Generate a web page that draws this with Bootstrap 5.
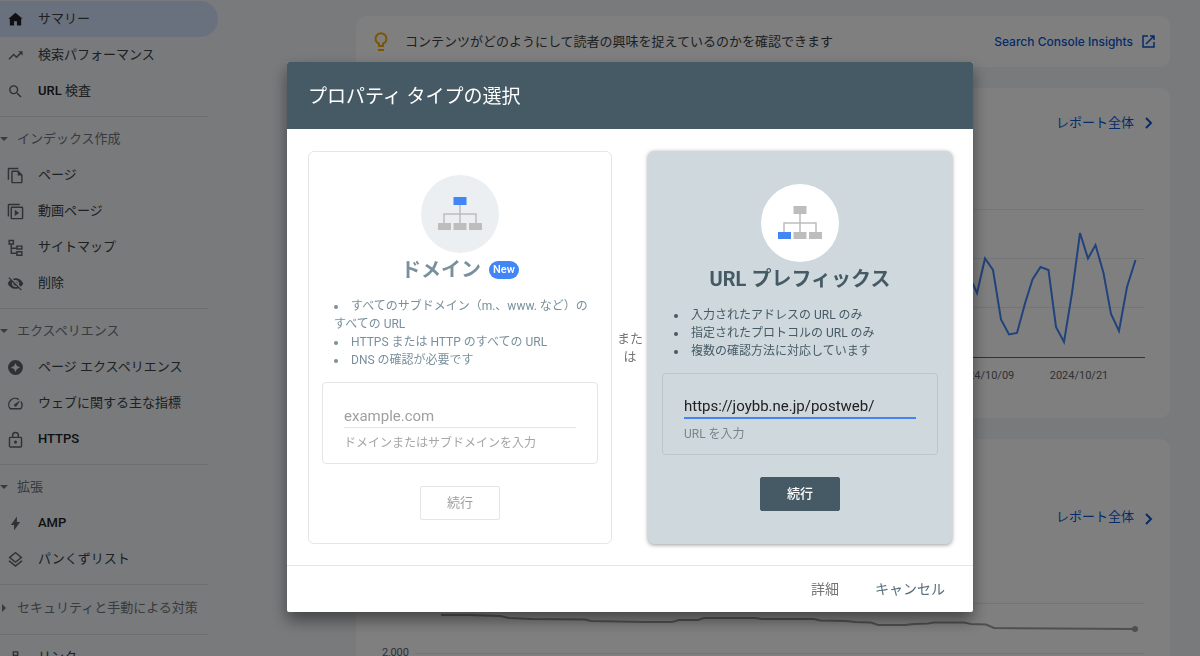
<!DOCTYPE html>
<html lang="ja">
<head>
<meta charset="utf-8">
<meta name="viewport" content="width=device-width, initial-scale=1">
<title>プロパティ タイプの選択</title>
<link href="https://cdn.jsdelivr.net/npm/bootstrap@5.3.0/dist/css/bootstrap.min.css" rel="stylesheet">
<style>
  body { font-family: Roboto, "Noto Sans CJK JP", sans-serif; font-size: 13px; background: #f0f4f9; color: #202124; overflow: hidden; height: 100vh; }
  /* sidebar */
  .side { width: 218px; padding-top: 1px; flex: none; }
  .side a { height: 36px; padding-left: 7px; gap: 14px; color: #3c4043; font-weight: 400; white-space: nowrap; }
  .side a svg { width: 17px; height: 17px; flex: none; fill: #5f6368; }
  .side a.current { background: #d3e3fd; border-radius: 0 18px 18px 0; }
  .side a.current svg { fill: #202124; }
  .side .latin { font-weight: 500; color: #202124; }
  .side hr { margin: 7px 10px 0 0; color: #dadce0; opacity: 1; }
  .side .group-title { height: 40px; padding-top: 4px; gap: 9px; color: #70757a; font-size: 13px; white-space: nowrap; }
  .side .group-title.collapsed-group { height: 42px; }
  .group-title svg { width: 8px; height: 8px; fill: #70757a; }
  /* page behind the dialog */
  .page-main { padding: 16px 30px 0 138px; gap: 21px; }
  .panel { background: #fff; border-radius: 10px; }
  .tip { height: 51px; padding: 0 14px 0 16px; gap: 15px; color: #3c4043; }
  .blue { color: #0b57d0; fill: #0b57d0; }
  .brand-text { font-family: Inter, Roboto, sans-serif; font-weight: 500; font-size: 12px; }
  .report-link { padding: 25px 13px 0 0; gap: 7px; height: 45px; }
  .lower-link { padding-top: 68px; height: 93px; }
  .chart text { font-size: 11px; fill: #5f6368; }
  .grid-line { stroke: #e8eaed; }
  /* dialog */
  .modal { --bs-modal-width: 686px; --bs-modal-margin: 62px; --bs-modal-border-radius: 2px; --bs-modal-border-width: 0; padding-left: 60px; }
  .modal-content { box-shadow: 0 8px 16px rgba(0,0,0,.45); }
  .modal-header { background: #455a64; color: #fff; padding: 3px 21px 0; height: 67px; border: 0; border-radius: 2px 2px 0 0; }
  .modal-title { font-size: 19px; font-weight: 400; }
  .modal-body { padding: 22px 21px 21px; }
  .modal-footer { height: 47px; padding: 0 28px; border-top: 1px solid #e4e6e7; gap: 36px; }
  .modal-footer button { font-size: 14px; color: #757575; margin: 0; }
  .modal-footer .cancel { color: #546e7a; }
  .choice { border: 1px solid #e4e6e7; border-radius: 6px; padding: 23px 13px; flex: 1 1 0; min-width: 0; }
  .choice.selected { background: #cfd8dc; border-color: #cfd8dc; box-shadow: 0 1px 4px rgba(0,0,0,.4); color: #455a64; }
  .between { width: 36px; font-size: 13px; line-height: 18px; color: #757575; }
  .disc { width: 78px; height: 78px; background: #eceff1; }
  .selected .disc { background: #fff; }
  .choice h2 { font-size: 20px; line-height: 30px; font-weight: 700; margin: 2px 0 12px; }
  .unselected { color: #78909c; }
  .new-badge { background: #4285f4; font-size: 11px; line-height: 12px; font-weight: 500; padding: 3px 4px; }
  .choice ul { font-size: 12px; line-height: 18px; list-style-position: inside; padding: 0 4px 0 12px; margin: 0 0 13px; }
  .entry { border: 1px solid #e4e6e7; border-radius: 4px; height: 82px; padding: 21px 21px 0; margin-bottom: 22px; }
  .selected .entry { border-color: #bcc5c9; }
  .entry input { font-size: 15px; line-height: 20px; height: 24px; padding: 0; border: 0; border-bottom: 1px solid #e4e6e7; border-radius: 0; background: transparent; color: #212121; outline: 0; }
  .entry input::placeholder { color: #a0a0a0; }
  .selected .entry input { border-bottom: 2px solid #4285f4; }
  .entry label { font-size: 12px; line-height: 16px; margin-top: 7px; color: #a6a6a6; }
  .selected .entry label { color: #78868c; }
  .go { width: 80px; height: 34px; font-size: 13px; padding: 0; border-radius: 2px; border: 1px solid #e4e6e7; background: #fff; color: #9e9e9e; }
  .go.primary { background: #455a64; border-color: #455a64; color: #fff; font-weight: 500; }
</style>
</head>
<body>
<div class="d-flex">
  <nav class="side">
    <a href="#" class="current d-flex align-items-center text-decoration-none"><svg viewBox="0 0 24 24"><path d="M10 20.500v-6h4v6h6v-9.500h2L12 2.500 2 11h2v9.500z"/></svg>サマリー</a>
    <a href="#" class="d-flex align-items-center text-decoration-none"><svg viewBox="0 0 24 24"><path d="M16 6l2.290 2.290-4.880 4.880-4-4L2 16.590 3.410 18l6-6 4 4 6.300-6.290L22 12V6z"/></svg>検索パフォーマンス</a>
    <a href="#" class="d-flex align-items-center text-decoration-none"><svg viewBox="0 0 24 24"><path d="M15.500 14h-.79l-.28-.27C15.410 12.590 16 11.110 16 9.500 16 5.910 13.090 3 9.500 3S3 5.910 3 9.500 5.910 16 9.500 16c1.610 0 3.090-.59 4.230-1.570l.27.28v.79l5 4.990L20.490 19l-4.990-5zm-6 0C7.010 14 5 11.990 5 9.500S7.010 5 9.500 5 14 7.010 14 9.500 11.990 14 9.500 14z"/></svg><span><span class="latin">URL</span> 検査</span></a>
    <hr>
    <div class="group-title d-flex align-items-center"><svg viewBox="0 0 8 8"><path d="M0 2h8L4 6z"/></svg>インデックス作成</div>
    <a href="#" class="d-flex align-items-center text-decoration-none"><svg viewBox="0 0 24 24"><path d="M16 1H3C1.900 1 1 1.900 1 3v15h2V3h13zM16 5H8C6.900 5 6 5.900 6 7v14c0 1.100.9 2 2 2h12c1.100 0 2-.9 2-2V11zM8 21V7h7v5h5v9z"/></svg>ページ</a>
    <a href="#" class="d-flex align-items-center text-decoration-none"><svg viewBox="0 0 24 24"><path d="M18 1H3C1.900 1 1 1.900 1 3v16h2V3h15zM21 5H7C5.900 5 5 5.900 5 7v14c0 1.100.9 2 2 2h14c1.100 0 2-.9 2-2V7c0-1.100-.9-2-2-2zM7 21V7h14v14zM11 9.500v9l6-4.500z"/></svg>動画ページ</a>
    <a href="#" class="d-flex align-items-center text-decoration-none"><svg viewBox="0 0 24 24"><path d="M2 1h8v7H7v4h6V9h9v6h-9v-1H7v5h6v-2h9v7h-9v-3H5V8H2zM4 3v3h4V3zM15 11v2h5v-2zM15 19v3h5v-3z" fill-rule="evenodd"/></svg>サイトマップ</a>
    <a href="#" class="d-flex align-items-center text-decoration-none"><svg viewBox="0 0 24 24"><path d="M12 7c2.760 0 5 2.240 5 5 0 .65-.13 1.260-.36 1.830l2.920 2.920c1.510-1.260 2.700-2.890 3.430-4.750-1.730-4.390-6-7.500-11-7.500-1.400 0-2.740.25-3.980.7l2.160 2.160C10.740 7.130 11.350 7 12 7zM2 4.270l2.740 2.740C3.080 8.300 1.780 10.020 1 12c1.730 4.390 6 7.500 11 7.500 1.550 0 3.030-.3 4.380-.84L19.730 22 21 20.730 3.270 3zM7.530 9.800l1.550 1.550c-.05.21-.08.43-.08.65 0 1.660 1.340 3 3 3 .22 0 .44-.03.65-.08l1.550 1.550c-.67.33-1.410.53-2.200.53-2.760 0-5-2.240-5-5 0-.79.2-1.530.53-2.200zM11.840 9.020l3.150 3.150.02-.16c0-1.660-1.340-3-3-3z"/></svg>削除</a>
    <hr>
    <div class="group-title d-flex align-items-center"><svg viewBox="0 0 8 8"><path d="M0 2h8L4 6z"/></svg>エクスペリエンス</div>
    <a href="#" class="d-flex align-items-center text-decoration-none"><svg viewBox="0 0 24 24"><path fill-rule="evenodd" d="M12 1.500a10.500 10.500 0 1 0 0 21 10.500 10.500 0 0 0 0-21zM12 5.500l2 4.500 4.500 2-4.500 2-2 4.500-2-4.500-4.500-2 4.500-2z"/></svg>ページ エクスペリエンス</a>
    <a href="#" class="d-flex align-items-center text-decoration-none"><svg viewBox="0 0 24 24"><path d="M20.400 8.600l-1.200 1.800A8 8 0 0 1 19 18.500H5A8 8 0 0 1 15.600 6.900l1.800-1.300A10 10 0 0 0 3.400 19.500c.3.600 1 1 1.600 1H19c.7 0 1.300-.4 1.700-1a10 10 0 0 0-.3-10.900zM10.600 15.900a2 2 0 0 0 2.800 0L19 7.500l-8.400 5.600a2 2 0 0 0 0 2.800z"/></svg>ウェブに関する主な指標</a>
    <a href="#" class="d-flex align-items-center text-decoration-none"><svg viewBox="0 0 24 24"><path fill-rule="evenodd" d="M19 8h-2V6A5 5 0 0 0 7 6v2H5c-1.500 0-2.500.9-2.500 2v11c0 1.100 1 2.500 2.500 2.500h14c1.500 0 2.500-1.400 2.500-2.500V10c0-1.100-1-2-2.500-2zM9 6a3 3 0 0 1 6 0v2H9zM4.500 10h15v11.500h-15zM12 13.500a2.200 2.200 0 1 0 0 4.400 2.200 2.200 0 0 0 0-4.400z"/></svg><span class="latin">HTTPS</span></a>
    <hr>
    <div class="group-title d-flex align-items-center"><svg viewBox="0 0 8 8"><path d="M0 2h8L4 6z"/></svg>拡張</div>
    <a href="#" class="d-flex align-items-center text-decoration-none"><svg viewBox="0 0 24 24"><path d="M10 22v-8H5.500L14 2v8h4.500z"/></svg><span class="latin">AMP</span></a>
    <a href="#" class="d-flex align-items-center text-decoration-none"><svg viewBox="0 0 24 24"><path fill-rule="evenodd" d="M12 1L2 9l10 8 10-8zM12 3.600L18.700 9 12 14.400 5.300 9zM3.600 13L2 14.300l10 8.200 10-8.200L20.400 13 12 19.800z"/></svg>パンくずリスト</a>
    <hr>
    <div class="group-title collapsed-group d-flex align-items-center"><svg viewBox="0 0 8 8"><path d="M2 0v8l4-4z"/></svg>セキュリティと手動による対策</div>
    <hr>
    <a href="#" class="d-flex align-items-center text-decoration-none mt-1"><svg viewBox="0 0 24 24"><path fill-rule="evenodd" d="M8 3h8v7h-3v3h7v8h-8v-6H4v-2h7v-3H8zM10 5v3h4V5z"/></svg>リンク</a>
  </nav>

  <main class="page-main flex-grow-1 d-flex flex-column">
    <section class="panel tip d-flex align-items-center">
      <svg width="18" height="20" viewBox="0 0 18 20" fill="none" stroke="#f9ab00" stroke-width="2"><path d="M7 14v-2.200a5.500 5.500 0 1 1 4 0V14zM6 18h6"/></svg>
      <span>コンテンツがどのようにして読者の興味を捉えているのかを確認できます</span>
      <a href="#" class="blue brand-text ms-auto d-flex align-items-center gap-2 text-decoration-none">Search Console Insights
        <svg width="15" height="15" viewBox="0 0 15 15" fill="none" stroke="#0b57d0" stroke-width="1.500"><path d="M7 2H2v11h11V8M9 2h4v4M13 2L5 10"/></svg></a>
    </section>
    <section class="panel">
      <a href="#" class="report-link blue d-flex justify-content-end align-items-center text-decoration-none">レポート全体
        <svg width="16" height="16" viewBox="0 0 16 16" fill="none" stroke="#0b57d0" stroke-width="2"><path d="M5 3l5 5-5 5"/></svg></a>
      <svg class="chart d-block w-100" viewBox="0 0 814 285">
        <path class="grid-line" d="M50 76.500H789M50 125.500H789M50 174.500H789"/>
        <path d="M50 224.500H789" stroke="#5f6368"/>
        <polyline fill="none" stroke="#4285f4" stroke-width="2" points="609,139 617,151 621,160 629,125.500 637,137 645,186.500 653,201.500 661,200 669,170.500 676.500,146.500 684.500,134 692.500,137 700,194 708,209 716,160 724,100 732,125.500 739.500,112 747.500,140 755,181 763,198 771,154 779.500,127"/>
        <text x="629" y="246" text-anchor="middle">2024/10/09</text>
        <text x="723" y="246" text-anchor="middle">2024/10/21</text>
      </svg>
    </section>
    <section class="panel">
      <a href="#" class="report-link lower-link blue d-flex justify-content-end align-items-start text-decoration-none">レポート全体
        <svg class="mt-1" width="16" height="16" viewBox="0 0 16 16" fill="none" stroke="#0b57d0" stroke-width="2"><path d="M5 3l5 5-5 5"/></svg></a>
      <svg class="chart d-block w-100" viewBox="0 0 814 140">
        <path class="grid-line" d="M59 71.500H789M59 121.500H789"/>
        <polyline fill="none" stroke="#9aa0a6" stroke-width="2" points="85,83 112,83 144,84 153,86 176,87 229,87.500 235,89 288,90 316,90 323,88 342,88 348,86 399,86 406,87 458,87 464,88.500 490,89 499,90 515,90.500 522,93 549,93 558,92 572,91.500 578,90.500 608,90.500 615,92 630,92.500 638,96 779,97"/>
        <circle cx="779" cy="97" r="3" fill="#9aa0a6"/>
        <text x="53" y="124" text-anchor="end">2,000</text>
      </svg>
    </section>
  </main>
</div>

<div class="modal-backdrop show"></div>
<div class="modal show d-block" role="dialog" aria-modal="true" aria-labelledby="dialogTitle">
  <div class="modal-dialog">
    <div class="modal-content">
      <div class="modal-header"><h1 class="modal-title" id="dialogTitle">プロパティ タイプの選択</h1></div>
      <div class="modal-body d-flex">
        <section class="choice unselected d-flex flex-column justify-content-center">
          <div class="disc rounded-circle mx-auto d-flex align-items-center justify-content-center">
            <svg width="44" height="34" viewBox="0 0 44 34"><path d="M22 8v18M6 26v-9h32v9" fill="none" stroke="#bdbdbd" stroke-width="1.500"/><path fill="#bdbdbd" d="M0 26h13v7H0zM15.500 26h13v7h-13zM31 26h13v7H31z"/><path fill="#4285f4" d="M15.500 0h13v8h-13z"/></svg>
          </div>
          <h2 class="d-flex align-items-center justify-content-center gap-2">ドメイン <span class="badge rounded-pill new-badge">New</span></h2>
          <ul>
            <li>すべてのサブドメイン（m.、www. など）のすべての URL</li>
            <li>HTTPS または HTTP のすべての URL</li>
            <li>DNS の確認が必要です</li>
          </ul>
          <div class="entry">
            <input class="w-100 d-block" type="text" id="domain" placeholder="example.com">
            <label class="d-block" for="domain">ドメインまたはサブドメインを入力</label>
          </div>
          <button type="button" class="btn go mx-auto">続行</button>
        </section>
        <div class="between d-flex align-items-center text-center"><span class="w-100 px-1">また<br>は</span></div>
        <section class="choice selected d-flex flex-column justify-content-center">
          <div class="disc rounded-circle mx-auto d-flex align-items-center justify-content-center">
            <svg width="44" height="34" viewBox="0 0 44 34"><path d="M22 8v18M6 26v-9h32v9" fill="none" stroke="#bdbdbd" stroke-width="1.500"/><path fill="#bdbdbd" d="M15.500 0h13v8h-13zM15.500 26h13v7h-13zM31 26h13v7H31z"/><path fill="#4285f4" d="M0 26h13v7H0z"/></svg>
          </div>
          <h2 class="text-center">URL プレフィックス</h2>
          <ul>
            <li>入力されたアドレスの URL のみ</li>
            <li>指定されたプロトコルの URL のみ</li>
            <li>複数の確認方法に対応しています</li>
          </ul>
          <div class="entry">
            <input class="w-100 d-block" type="text" id="prefix" value="https://joybb.ne.jp/postweb/">
            <label class="d-block" for="prefix">URL を入力</label>
          </div>
          <button type="button" class="btn go primary mx-auto">続行</button>
        </section>
      </div>
      <div class="modal-footer">
        <button type="button" class="btn p-0 border-0">詳細</button>
        <button type="button" class="btn p-0 border-0 cancel">キャンセル</button>
      </div>
    </div>
  </div>
</div>
<script src="https://cdn.jsdelivr.net/npm/bootstrap@5.3.0/dist/js/bootstrap.bundle.min.js"></script>
</body>
</html>
